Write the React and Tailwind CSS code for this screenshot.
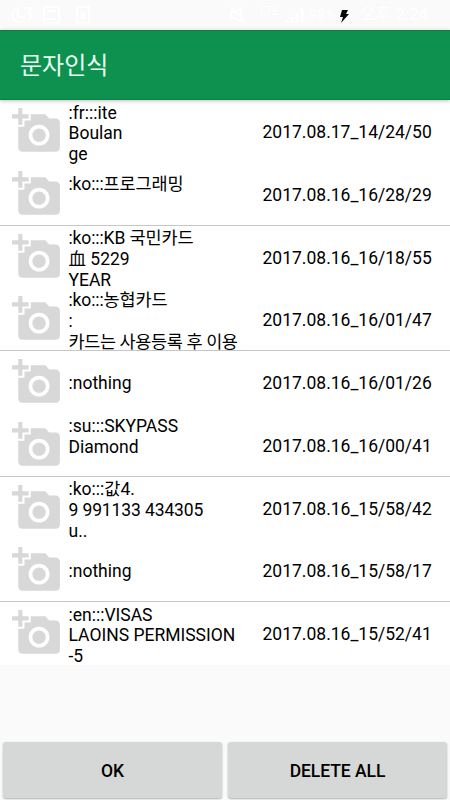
import React from "react";
import { MdAddAPhoto } from "react-icons/md";

const records = [
    { lines: [":fr:::ite", "Boulan", "ge"], date: "2017.08.17_14/24/50" },
    { lines: [":ko:::프로그래밍", ""], date: "2017.08.16_16/28/29" },
    { lines: [":ko:::KB 국민카드", "血 5229", "YEAR"], date: "2017.08.16_16/18/55" },
    { lines: [":ko:::농협카드", ":", "카드는 사용등록 후 이용"], date: "2017.08.16_16/01/47" },
    { lines: [":nothing"], date: "2017.08.16_16/01/26" },
    { lines: [":su:::SKYPASS", "Diamond", ""], date: "2017.08.16_16/00/41" },
    { lines: [":ko:::값4.", "9 991133 434305", "u.."], date: "2017.08.16_15/58/42" },
    { lines: [":nothing"], date: "2017.08.16_15/58/17" },
    { lines: [":en:::VISAS", "LAOINS PERMISSION", "-5"], date: "2017.08.16_15/52/41" },
];

// narrower spacing for hangul and long digit lines
const lineTracking = (line) => {
    if (/^[가-힣]/.test(line)) return "tracking-[-0.38px]";
    if (/[가-힣]{4}|^\d/.test(line)) return "tracking-[-0.12px]";
    return "";
};

function StatusBar() {
    return (
        <div className="h-[30px] shrink-0 flex items-center justify-between bg-[#fafafa] text-white text-[17px] pl-[10px] pr-3">
            <svg className="w-[84px] h-5" viewBox="0 0 84 20" fill="none" stroke="currentColor" strokeWidth="2">
                <path d="M8 3a7 7 0 1 0 6 12M8 3v9h7M14 3h8l-3 5 3 4-4 4M34 2h15v16H34zM37 6h9M37 14h9M67 2h12v16H67zM70 8l6 6M76 8l-6 6" />
            </svg>
            <div className="flex items-center">
                <svg className="w-[18px] h-5" viewBox="0 0 18 20" fill="none" stroke="currentColor" strokeWidth="2">
                    <path d="M1 7h4l6-4v14l-6-4H1zM1 2l15 16" />
                </svg>
                <span className="ml-3 mb-2 text-[12px] leading-none">LTE</span>
                <svg className="w-[19px] h-5 ml-1.5" viewBox="0 0 19 20" fill="none" stroke="currentColor" strokeWidth="3">
                    <path d="M2 18v-3M7 18v-6M12 18V8M17 18V3" />
                </svg>
                <span className="ml-1 text-[15px]">98%</span>
                <svg className="w-[9px] h-[13px] ml-1 mr-[11px] mt-0.5" viewBox="0 0 9 13">
                    <path d="M2 0h6L6 4h3L1 13l2-6H0z" fill="#080808" />
                </svg>
                <span className="w-[78px] whitespace-nowrap">오후 2:24</span>
            </div>
        </div>
    );
}

function RecordRow({ record, divider }) {
    return (
        <li className={`h-[62.75px] flex items-center bg-white ${divider ? "border-b border-[#c6c6c6]" : ""}`}>
            <MdAddAPhoto className="w-[50px] h-[50px] ml-3 shrink-0 text-[#d8d8d8]" />
            <div className={`w-[194.5px] pl-[6.5px] shrink-0 ${record.lines.length === 3 ? "pt-[5px]" : "pt-[3px]"}`}>
                {record.lines.map((line, i) => (
                    <p key={i} className={`h-[20.8px] leading-[20.8px] whitespace-pre ${lineTracking(line)}`}>{line}</p>
                ))}
            </div>
            <span className="pl-[6px] pt-[2px] whitespace-nowrap">{record.date}</span>
        </li>
    );
}

export default function App() {
    return (
        <div className="w-[450px] h-[800px] flex flex-col overflow-hidden bg-[#fafafa] text-black text-[17.5px] font-[Roboto,'Noto_Sans_CJK_KR',sans-serif]">
            <StatusBar />
            <header className="h-[70px] shrink-0 flex items-center pl-5 pt-0.5 bg-[#0e914f] border-y border-[#0b8043] shadow-[0_1px_4px_rgba(0,0,0,0.25)] relative z-10">
                <h1 className="text-[24px] text-[#e9fff4]">문자인식</h1>
            </header>
            <ul className="flex-1 min-h-0">
                {records.map((record, i) => (
                    <RecordRow key={record.date} record={record} divider={i % 2 === 1} />
                ))}
            </ul>
            <footer className="h-[58px] shrink-0 flex gap-[6px] pl-[3px] pr-[3px] pb-[2px]">
                <button className="flex-1 pt-0.5 rounded-[3px] bg-[#d6d7d7] font-medium shadow-[0_1px_2px_rgba(0,0,0,0.3)]">OK</button>
                <button className="flex-1 pt-0.5 rounded-[3px] bg-[#d6d7d7] font-medium tracking-[-0.05px] shadow-[0_1px_2px_rgba(0,0,0,0.3)]">DELETE ALL</button>
            </footer>
        </div>
    );
}
